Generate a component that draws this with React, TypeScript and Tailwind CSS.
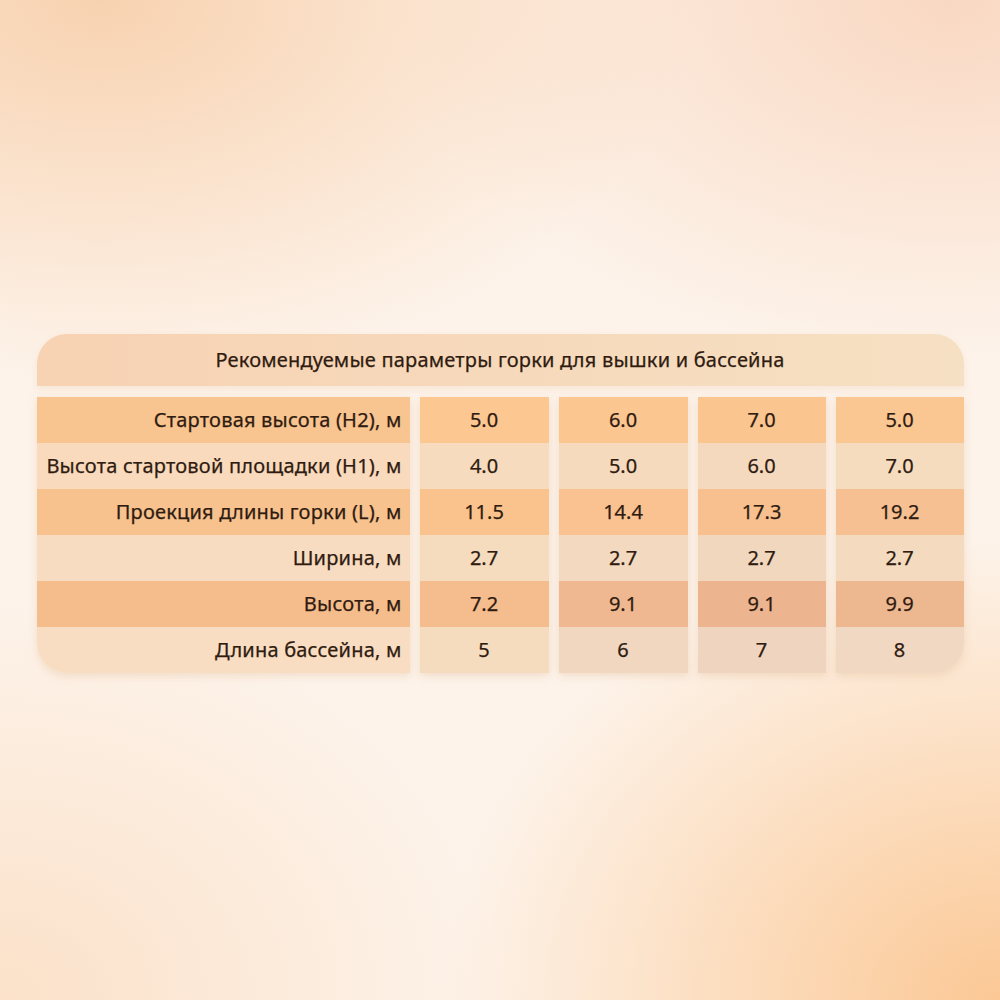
import React from "react";

const labels = [
  "Стартовая высота (H2), м",
  "Высота стартовой площадки (H1), м",
  "Проекция длины горки (L), м",
  "Ширина, м",
  "Высота, м",
  "Длина бассейна, м",
];

const values = [
  ["5.0", "4.0", "11.5", "2.7", "7.2", "5"],
  ["6.0", "5.0", "14.4", "2.7", "9.1", "6"],
  ["7.0", "6.0", "17.3", "2.7", "9.1", "7"],
  ["5.0", "7.0", "19.2", "2.7", "9.9", "8"],
];

const labelBg = [
  "bg-[#f8c48f]",
  "bg-[#f9dabd]",
  "bg-[#f8c28e]",
  "bg-[#f8dcc1]",
  "bg-[#f6bd8c]",
  "bg-[#f8ddc2]",
];

const colBg = [
  ["bg-[#fcc790]", "bg-[#f7dbbe]", "bg-[#fac38d]", "bg-[#f6dcbe]", "bg-[#f5bd8e]", "bg-[#f5dcbf]"],
  ["bg-[#fcc690]", "bg-[#f6dabe]", "bg-[#f9c290]", "bg-[#f3d9bf]", "bg-[#efb891]", "bg-[#f1d7c0]"],
  ["bg-[#fbc590]", "bg-[#f5d9be]", "bg-[#f7c08e]", "bg-[#f1d7be]", "bg-[#ecb48f]", "bg-[#efd5c0]"],
  ["bg-[#fac692]", "bg-[#f6dcbf]", "bg-[#f6c092]", "bg-[#f4dbc0]", "bg-[#edb790]", "bg-[#f1d8c3]"],
];

export default function App() {
  return (
    <div
      className="w-[1000px] h-[1000px] relative overflow-hidden flex flex-col items-center justify-center text-[#2f1b10]"
      style={{
        fontFamily: '"Noto Sans", "Open Sans", sans-serif',
        background:
          "radial-gradient(ellipse 600px 380px at 10% 0%, #f8d2b0 0%, rgba(248,210,176,0) 100%), radial-gradient(ellipse 560px 460px at 100% 100%, #fbc895 0%, rgba(251,200,149,0) 100%), radial-gradient(ellipse 560px 360px at 95% 0%, #f9d8c2 0%, rgba(249,216,194,0) 100%), radial-gradient(ellipse 500px 400px at 0% 100%, #fbe1c9 0%, rgba(251,225,201,0) 100%), #fdf3ea",
      }}
    >
      <div className="w-[927px] flex flex-col gap-[11px] mt-[7px]">
        <div className="h-[52px] rounded-t-[30px] bg-gradient-to-r from-[#f7d2b3] to-[#f6e0c3] flex items-center justify-center shadow-[0_3px_6px_rgba(230,190,150,0.25)]">
          <span className="text-[20px] leading-none tracking-[0.2px] whitespace-nowrap [-webkit-text-stroke:0.25px_#2f1b10]">
            Рекомендуемые параметры горки для вышки и бассейна
          </span>
        </div>
        <div className="flex gap-[10px]">
          <div className="w-[373px] flex flex-col rounded-bl-[30px] overflow-hidden shadow-[0_3px_8px_rgba(220,180,140,0.35)]">
            {labels.map((l, i) => (
              <div
                key={i}
                className={`h-[46px] flex items-center justify-end pr-[8px] text-[20px] tracking-[0.2px] whitespace-nowrap [-webkit-text-stroke:0.25px_#2f1b10] ${labelBg[i]}`}
              >
                {l}
              </div>
            ))}
          </div>
          {values.map((col, c) => (
            <div
              key={c}
              className={`${c < 2 ? "w-[129px]" : "w-[128px]"} flex flex-col overflow-hidden shadow-[0_3px_8px_rgba(220,180,140,0.35)] ${c === 3 ? "rounded-br-[30px]" : ""}`}
            >
              {col.map((v, r) => (
                <div
                  key={r}
                  className={`h-[46px] flex items-center justify-center text-[20px] [-webkit-text-stroke:0.25px_#2f1b10] ${colBg[c][r]}`}
                >
                  {v}
                </div>
              ))}
            </div>
          ))}
        </div>
      </div>
    </div>
  );
}
